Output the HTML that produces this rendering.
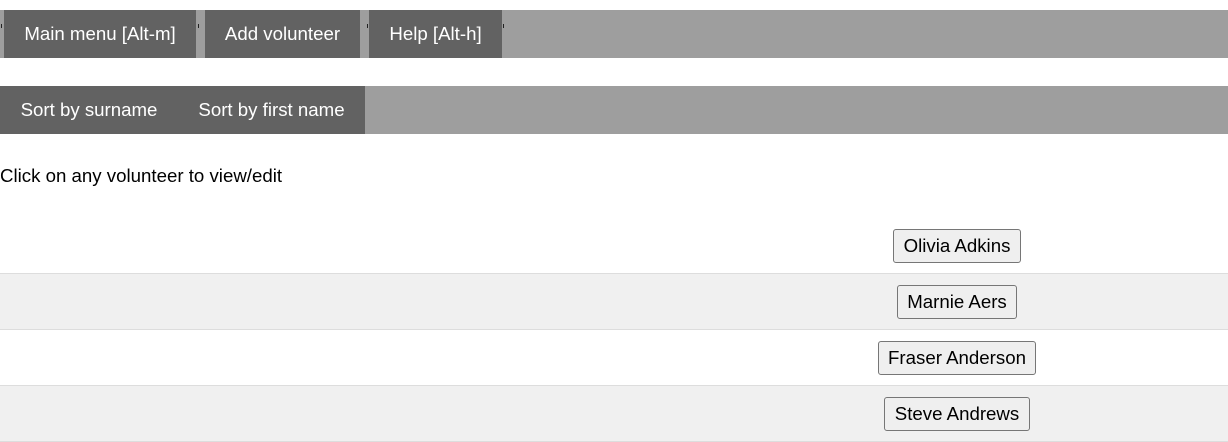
<!DOCTYPE html>
<html><head><style>
body{margin:0;font-family:"Liberation Sans",sans-serif;font-size:18.67px;background:#fff;color:#000;width:1228px;height:442px;overflow:hidden;position:relative}
.bar{position:absolute;left:0;width:1228px;height:48px;background:#9e9e9e}
.it{position:absolute;top:0;height:48px;background:#626262;color:#fff;line-height:48px;text-align:center}
.tick{position:absolute;top:14px;width:1px;height:4px;background:#222}
.msg{position:absolute;left:0;top:165px}
.row{position:absolute;left:0;width:1228px;height:55px;border-bottom:1px solid #ddd}
.row.g{background:#f0f0f0}
.cell{position:absolute;left:686px;width:542px;top:0;height:55px;display:flex;align-items:center;justify-content:center}
.btn{border:1px solid #767676;border-radius:3px;background:#efefef;padding:0 9.5px;height:32px;line-height:32px;font-size:18.67px}
</style></head><body>
<div class="bar" style="top:10px">
 <div class="tick" style="left:1px"></div>
 <div class="it" style="left:4px;width:192px">Main menu [Alt-m]</div>
 <div class="tick" style="left:198px"></div>
 <div class="it" style="left:205px;width:155px">Add volunteer</div>
 <div class="tick" style="left:367px"></div>
 <div class="it" style="left:369px;width:133px">Help [Alt-h]</div>
 <div class="tick" style="left:503px"></div>
</div>
<div class="bar" style="top:86px">
 <div class="it" style="left:0;width:178px">Sort by surname</div>
 <div class="it" style="left:178px;width:187px">Sort by first name</div>
</div>
<div class="msg">Click on any volunteer to view/edit</div>
<div class="row" style="top:218px"><div class="cell"><span class="btn">Olivia Adkins</span></div></div>
<div class="row g" style="top:274px"><div class="cell"><span class="btn">Marnie Aers</span></div></div>
<div class="row" style="top:330px"><div class="cell"><span class="btn">Fraser Anderson</span></div></div>
<div class="row g" style="top:386px"><div class="cell"><span class="btn">Steve Andrews</span></div></div>
</body></html>
